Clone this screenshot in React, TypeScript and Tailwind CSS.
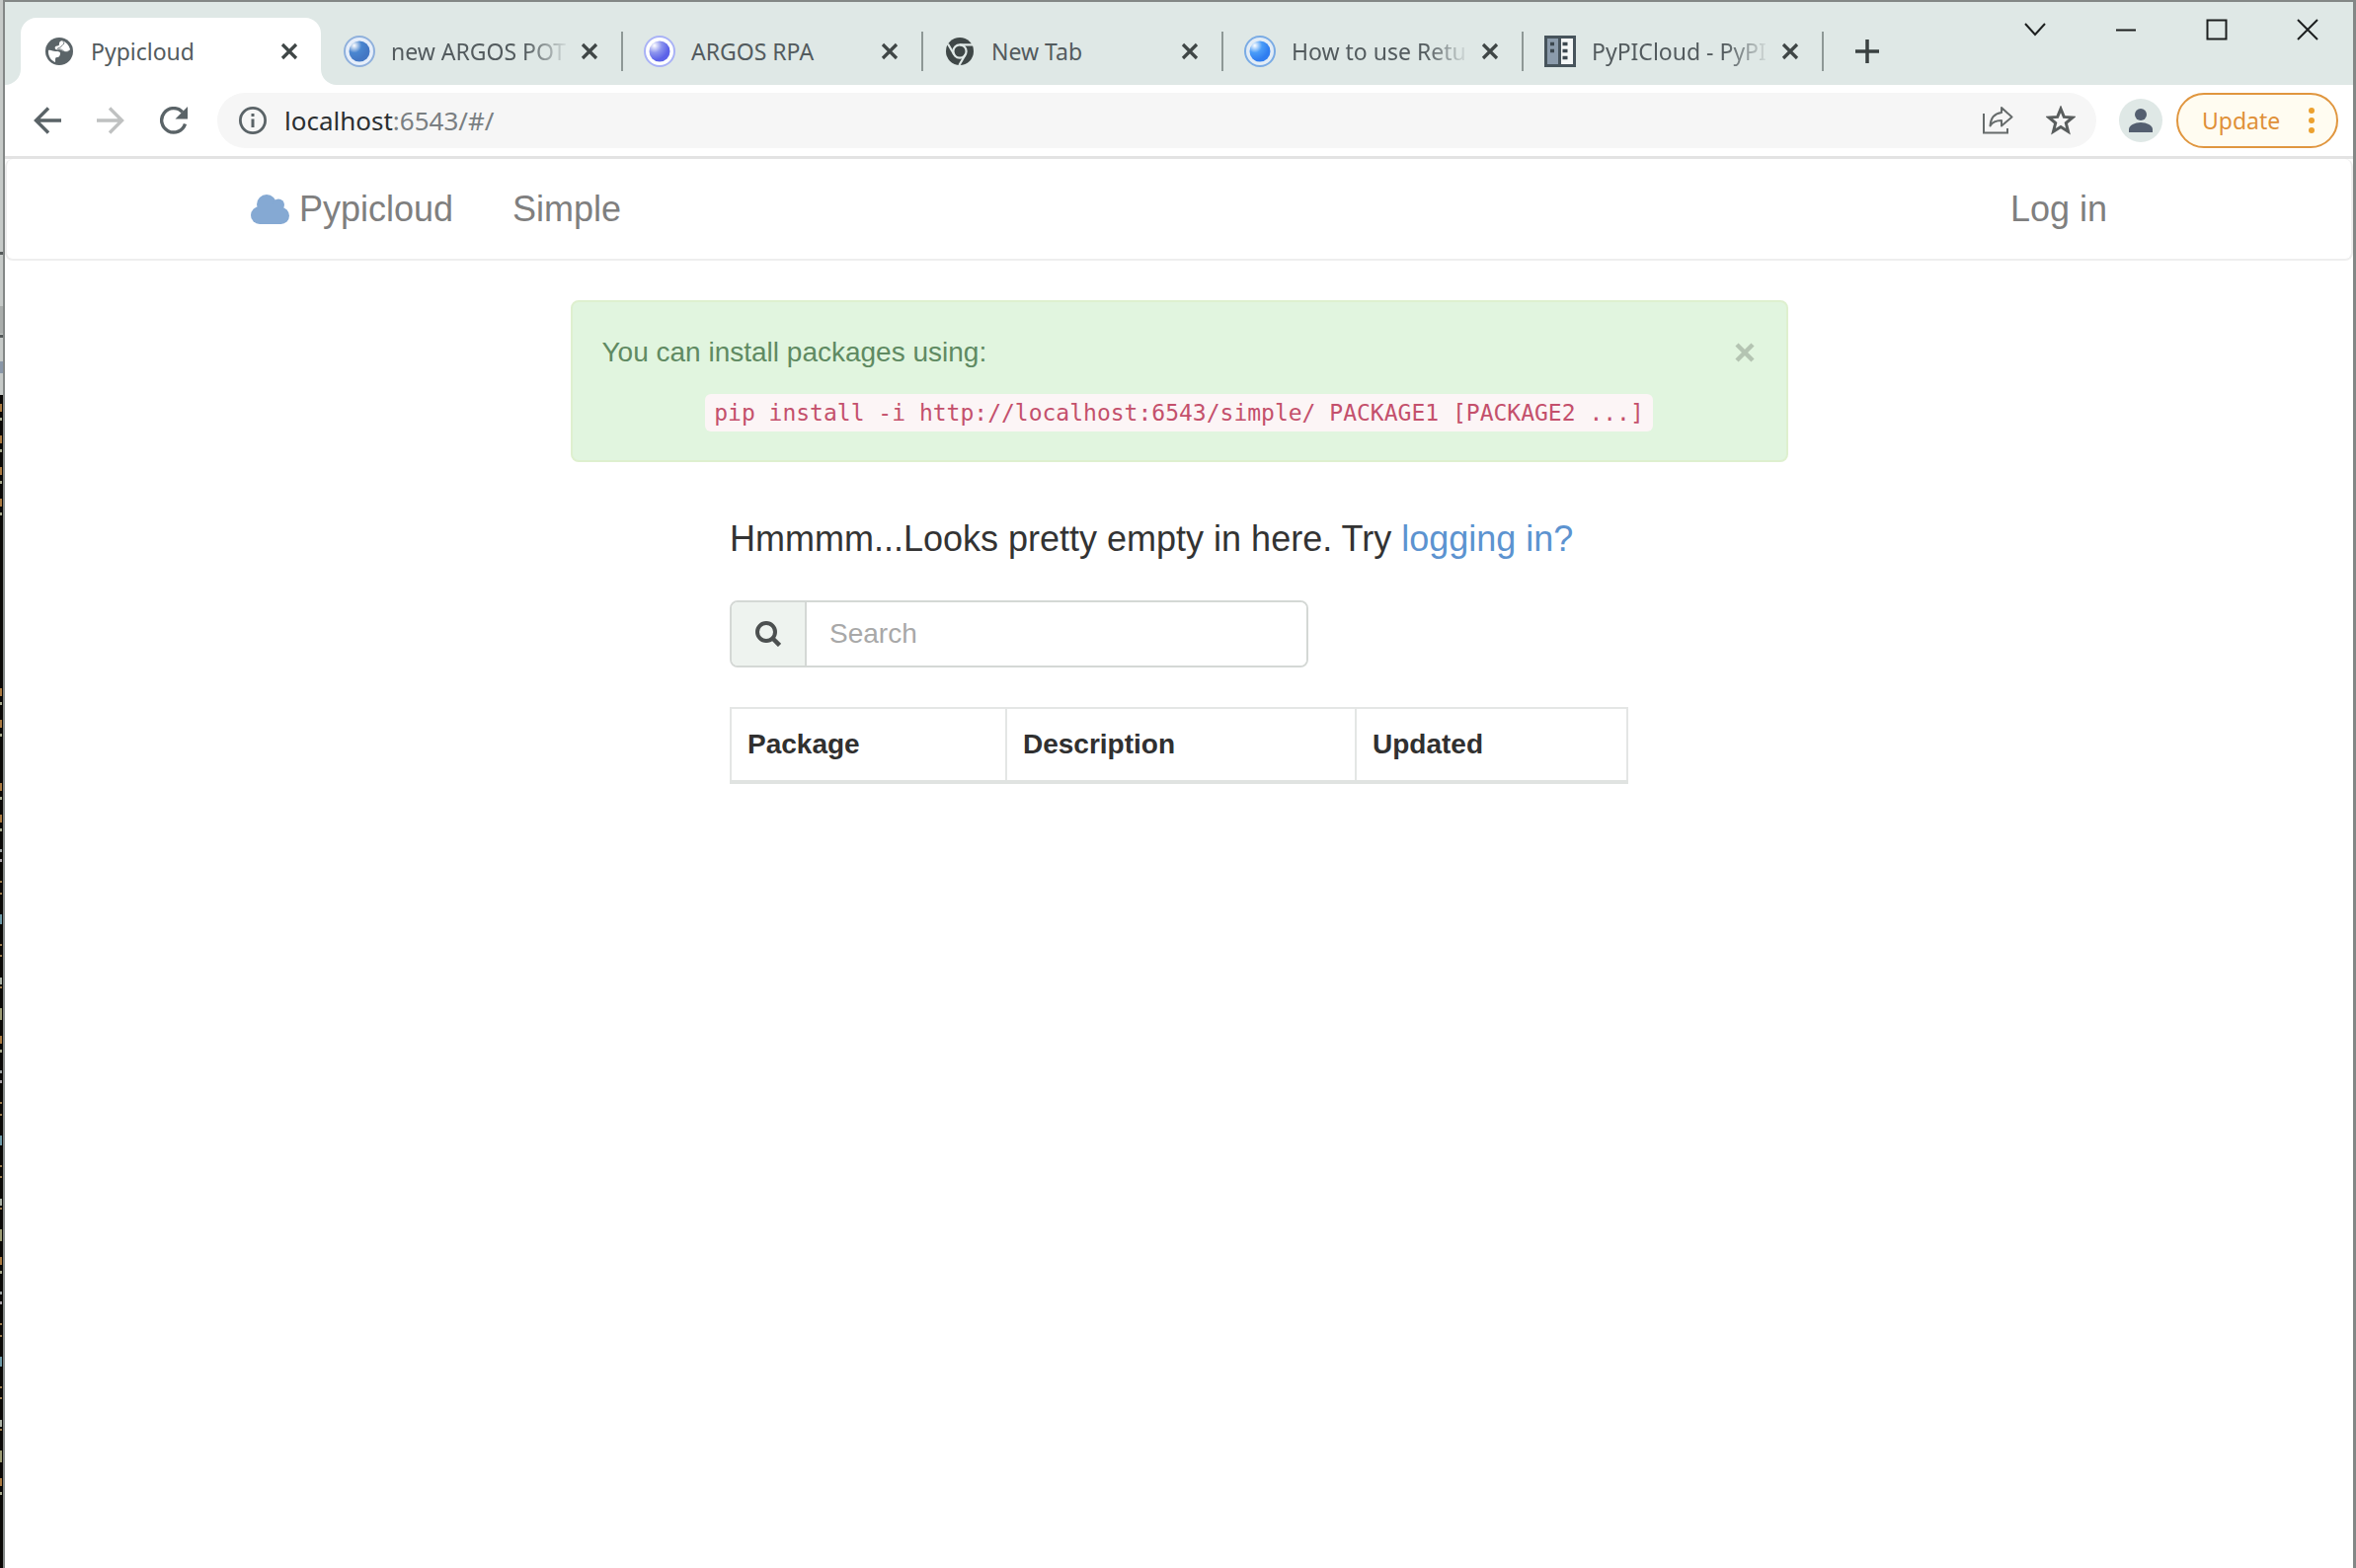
import React, { useState } from "react";

type TabInfo = { title: string; icon: React.ReactNode; active?: boolean; faded?: boolean };

function GlobeIcon() {
  return (
    <svg viewBox="0 0 28 28" className="size-7" aria-hidden="true">
      <circle cx="14" cy="14" r="14" fill="#5b6468" />
      <path d="M3 13c2-1 5 1 7 1s5 0 5 2-1 4-3 4-2 1-2 3v2C6 23.500 2.500 19 3 13z" fill="#fff" />
      <path d="M17 3.200c4 1.300 7 4.300 8 8.800-1 2-3 3-5 2.500S17 13 15 12.500s-4 .5-5-1 0-3 2-3 2-1 2-2.500 1-2.500 3-2.800z" fill="#fff" />
      <path d="M17.500 4c2 .8 1.500 3 0 3.500s-1 2-2.500 2.500-3 .5-2.500 1.500 2.500 0 4 .8 2 2.200 4 2.200 3.500-1 4.500-1c-.3 5-3.500 9-8 10.500 1.500-2 2-3.500 1-5.500" fill="none" stroke="#5b6468" strokeWidth="0.800" />
    </svg>
  );
}

function OrbIcon({ ring, inner, core, glow }: { ring: string; inner: string; core: string; glow: string }) {
  const id = "orb" + core.slice(1);
  return (
    <svg viewBox="0 0 32 32" className="size-8" aria-hidden="true">
      <defs>
        <radialGradient id={id} cx="0.25" cy="0.22" r="0.7">
          <stop offset="0" stopColor="#ffffff" />
          <stop offset="0.5" stopColor={glow} />
          <stop offset="1" stopColor={core} />
        </radialGradient>
      </defs>
      <circle cx="16" cy="16" r="15" fill={inner} stroke={ring} strokeWidth="2" />
      <circle cx="16" cy="16" r="10.500" fill={`url(#${id})`} />
    </svg>
  );
}

function ChromeIcon() {
  return (
    <svg viewBox="0 0 28 28" className="size-7" aria-hidden="true">
      <circle cx="14" cy="14" r="14" fill="#3f4747" />
      <circle cx="14" cy="14" r="6.600" fill="none" stroke="#dfe8e6" strokeWidth="2.200" />
      <path d="M14 7.400h13M8.300 17.300L2 6.500M19.700 17.300L13.400 28" stroke="#dfe8e6" strokeWidth="2.200" fill="none" />
    </svg>
  );
}

function ServerIcon() {
  return (
    <svg viewBox="0 0 32 32" className="size-8" aria-hidden="true">
      <rect x="1.500" y="1.500" width="29" height="29" fill="#f4f7f7" stroke="#47545c" strokeWidth="3" />
      <rect x="3" y="3" width="11" height="26" fill="#8b9bab" />
      <path d="M15.500 2v28" stroke="#47545c" strokeWidth="3" />
      <path d="M6 8.500h4M6 15.500h4M18.500 8.500h5M18.500 15.500h5M18.500 22.500h5" stroke="#3c484f" strokeWidth="3.500" />
    </svg>
  );
}

const tabs: TabInfo[] = [
  { title: "Pypicloud", icon: <GlobeIcon />, active: true },
  { title: "new ARGOS POT", icon: <OrbIcon ring="#8fb0dc" inner="#e6eefa" core="#4377c4" glow="#4a86d0" />, faded: true },
  { title: "ARGOS RPA", icon: <OrbIcon ring="#a9b2f6" inner="#ffffff" core="#5c62e8" glow="#8c94ee" /> },
  { title: "New Tab", icon: <ChromeIcon /> },
  { title: "How to use Retu", icon: <OrbIcon ring="#7aabe4" inner="#e2ecf6" core="#2f7df0" glow="#4a9cf8" />, faded: true },
  { title: "PyPICloud - PyPI", icon: <ServerIcon />, faded: true },
];

function Tab({ tab }: { tab: TabInfo }) {
  return (
    <div
      className={
        tab.active
          ? "relative flex h-17 w-76 shrink items-center rounded-t-2xl bg-white pr-4 pl-[23px]"
          : "relative flex h-17 w-76 shrink items-center pr-4 pl-[23px]"
      }
    >
      {tab.active && (
        <>
          <svg viewBox="0 0 16 16" className="absolute bottom-0 -left-4 size-4" aria-hidden="true">
            <path d="M16 0v16H0A16 16 0 0 0 16 0z" fill="#fff" />
          </svg>
          <svg viewBox="0 0 16 16" className="absolute -right-4 bottom-0 size-4" aria-hidden="true">
            <path d="M0 0v16h16A16 16 0 0 1 0 0z" fill="#fff" />
          </svg>
        </>
      )}
      <span className="flex w-8 shrink-0 justify-center">{tab.icon}</span>
      <button
        type="button"
        className={
          tab.faded
            ? "ml-4 h-9 min-w-0 flex-1 text-left text-[23px] leading-9 whitespace-nowrap text-[#535b5e] [mask-image:linear-gradient(to_right,#000_75%,transparent)]"
            : "ml-4 h-9 min-w-0 flex-1 text-left text-[23px] leading-9 whitespace-nowrap text-[#535b5e]"
        }
      >
        {tab.title}
      </button>
      <button type="button" aria-label={"Close " + tab.title} className="ml-1 flex size-8 shrink-0 items-center justify-center">
        <svg viewBox="0 0 18 18" className="size-[18px]" aria-hidden="true">
          <path d="M2 2l14 14M16 2L2 16" stroke="#3f4646" strokeWidth="3.200" />
        </svg>
      </button>
      {!tab.active && <span className="absolute top-3.5 -right-0.5 h-10 w-0.5 bg-[#8e9896]" />}
    </div>
  );
}

function WindowControls() {
  const items = [
    { label: "Search tabs", d: "M2 6l10 11L22 6" },
    { label: "Minimize", d: "M2 12.500h20" },
    { label: "Maximize", d: "M2.500 2.500h19v19h-19z" },
    { label: "Close window", d: "M2 2l20 20M22 2L2 22" },
  ];
  return (
    <div className="flex">
      {items.map((i) => (
        <button key={i.label} type="button" aria-label={i.label} className="flex h-14 w-23 items-center justify-center">
          <svg viewBox="0 0 24 24" className="size-6" fill="none" stroke="#1c1f1f" strokeWidth="2" aria-hidden="true">
            <path d={i.d} />
          </svg>
        </button>
      ))}
    </div>
  );
}

function TabStrip() {
  return (
    <div className="flex h-[84px] items-start justify-between bg-[#dfe8e6] pl-4">
      <div className="flex min-w-0 items-center pt-4">
        {tabs.map((t) => (
          <Tab key={t.title} tab={t} />
        ))}
        <button type="button" aria-label="New tab" className="ml-7 flex size-9 items-center justify-center">
          <svg viewBox="0 0 24 24" className="size-6" aria-hidden="true">
            <path d="M12 0v24M0 12h24" stroke="#3a4141" strokeWidth="3.500" />
          </svg>
        </button>
      </div>
      <WindowControls />
    </div>
  );
}

function Toolbar() {
  return (
    <div className="flex h-[75px] items-center border-b-3 border-[#e3e3e3] bg-white pr-[15px] pl-[27px]">
      <button type="button" aria-label="Back" className="flex size-8 items-center justify-center">
        <svg viewBox="0 0 28 28" className="size-7" fill="none" stroke="#5a6367" strokeWidth="3.400" aria-hidden="true">
          <path d="M28 14H3M15 1.500L2.500 14 15 26.500" />
        </svg>
      </button>
      <button type="button" aria-label="Forward" className="ml-8 flex size-8 items-center justify-center">
        <svg viewBox="0 0 28 28" className="size-7" fill="none" stroke="#bfc1c1" strokeWidth="3.400" aria-hidden="true">
          <path d="M0 14h25M13 1.500L25.500 14 13 26.500" />
        </svg>
      </button>
      <button type="button" aria-label="Reload" className="ml-8 flex size-8 items-center justify-center">
        <svg viewBox="0 0 28 28" className="size-7" aria-hidden="true">
          <path d="M25.500 17.500A12.200 12.200 0 1 1 22.800 5.500" fill="none" stroke="#5a6367" strokeWidth="3.400" />
          <path d="M28 0v12.500H15.500z" fill="#5a6367" />
        </svg>
      </button>
      <div className="ml-7 flex h-14 min-w-0 flex-1 items-center rounded-full bg-[#f6f6f6] pr-5 pl-[22px]">
        <svg viewBox="0 0 28 28" className="size-7 shrink-0" aria-hidden="true">
          <circle cx="14" cy="14" r="12.600" fill="none" stroke="#5a6367" strokeWidth="2.800" />
          <path d="M14 12.500v8.500M14 7v3" stroke="#5a6367" strokeWidth="3" />
        </svg>
        <div className="ml-[18px] flex-1 text-[26px] leading-9 text-[#7a7f82]">
          <span className="text-[#2b2f31]">localhost</span>:6543/#/
        </div>
        <button type="button" aria-label="Share" className="flex size-8 items-center justify-center">
          <svg viewBox="0 0 32 32" className="size-8" fill="none" stroke="#666b6b" strokeWidth="2" aria-hidden="true">
            <path d="M2 9v19.500h24V24" />
            <path d="M20 3l10.500 9.500L20 21.500v-5.500c-5.500 0-9 1-11.500 5.500C9 13.500 13 8.800 20 8z" strokeLinejoin="round" />
          </svg>
        </button>
        <button type="button" aria-label="Bookmark" className="ml-8 flex size-8 items-center justify-center">
          <svg viewBox="0 0 30 30" className="size-[30px]" fill="none" stroke="#595d5d" strokeWidth="3" aria-hidden="true">
            <path d="M15 3.200l3.300 8.200 8.700.6-6.700 5.600 2.200 8.600L15 21.500l-7.500 4.700 2.200-8.600L3 12l8.700-.6z" />
          </svg>
        </button>
      </div>
      <button type="button" aria-label="Profile" className="ml-[23px] flex size-11 shrink-0 items-center justify-center rounded-full bg-[#dfe8e6]">
        <svg viewBox="0 0 24 24" className="size-6" fill="#545f70" aria-hidden="true">
          <circle cx="12" cy="6" r="6" />
          <path d="M0 24v-3c0-4 6-7 12-7s12 3 12 7v3z" />
        </svg>
      </button>
      <button
        type="button"
        className="ml-3.5 flex h-14 w-41 shrink-0 items-center justify-between rounded-full border-2 border-[#e0963f] bg-[#fffcf1] pr-[22px] pl-6 text-[23px] text-[#df9038]"
      >
        Update
        <svg viewBox="0 0 6 28" className="h-7 w-1.5" fill="#eca12f" aria-hidden="true">
          <circle cx="3" cy="4" r="3" />
          <circle cx="3" cy="14" r="3" />
          <circle cx="3" cy="24" r="3" />
        </svg>
      </button>
    </div>
  );
}

function CloudIcon() {
  return (
    <svg viewBox="0 0 39 30" className="h-[30px] w-[39px]" fill="#85a9d3" aria-hidden="true">
      <circle cx="16" cy="10" r="10" />
      <circle cx="28" cy="10.500" r="6" />
      <circle cx="9" cy="21" r="9" />
      <circle cx="30.500" cy="21.500" r="8.500" />
      <path d="M7 10h25v10H7zM9 18h22v12H9z" />
    </svg>
  );
}

function Navbar() {
  return (
    <nav className="flex h-[103px] items-center justify-between rounded-lg border-2 border-t-0 border-[#eeeeee] px-[247px] text-4xl text-[#7f7f7f]">
      <div className="flex items-center gap-15">
        <a href="#/" className="flex items-center gap-2.5">
          <CloudIcon />
          Pypicloud
        </a>
        <a href="#/simple">Simple</a>
      </div>
      <a href="#/login">Log in</a>
    </nav>
  );
}

function InstallAlert() {
  const [open, setOpen] = useState(true);
  if (!open) return null;
  return (
    <section className="rounded-lg border-2 border-[#def0cf] bg-[#e1f5df] px-[30px] pt-[31px] pb-[29px]">
      <div className="flex items-center justify-between">
        <p className="text-[28px] leading-10 text-[#5f8a62]">You can install packages using:</p>
        <button type="button" aria-label="Dismiss" onClick={() => setOpen(false)} className="flex size-6 items-center justify-center">
          <svg viewBox="0 0 20 20" className="size-5" aria-hidden="true">
            <path d="M2 2l16 16M18 2L2 18" stroke="#b4c4b2" strokeWidth="4.500" />
          </svg>
        </button>
      </div>
      <div className="mt-[22px] flex justify-center">
        <code className="rounded-md bg-[#fcf5f6] px-[9px] font-['DejaVu_Sans_Mono',monospace] text-[23px] leading-[38px] whitespace-nowrap text-[#c4506c]">
          pip install -i http://localhost:6543/simple/ PACKAGE1 [PACKAGE2 ...]
        </code>
      </div>
    </section>
  );
}

function PackageList() {
  return (
    <section className="mx-auto mt-[58px] w-[910px]">
      <h1 className="text-4xl text-[#333333]">
        Hmmmm...Looks pretty empty in here. Try{" "}
        <a href="#/login" className="text-[#5c93d0]">
          logging in?
        </a>
      </h1>
      <div className="mt-[42px] flex h-17 w-[586px] overflow-hidden rounded-lg border-2 border-[#d4d8d5]">
        <label htmlFor="search" aria-label="Search" className="flex w-[74px] items-center justify-center bg-[#eef3ef]">
          <svg viewBox="0 0 26 26" className="size-[26px]" fill="none" stroke="#4c5050" aria-hidden="true">
            <circle cx="11" cy="11" r="9" strokeWidth="4" />
            <path d="M17.500 17.500l7 7" strokeWidth="4.500" />
          </svg>
        </label>
        <input
          id="search"
          type="text"
          placeholder="Search"
          className="min-w-0 flex-1 border-l-2 border-[#d4d8d5] bg-white px-[23px] text-[28px] outline-none placeholder:text-[#a8a8a8]"
        />
      </div>
      <table className="mt-10 w-full table-fixed border-collapse border-2 border-[#e4e6e5] text-left text-[28px] text-[#303030]">
        <thead>
          <tr className="border-b-4 border-[#e0e3e1]">
            <th scope="col" className="h-[75px] w-[279px] border-r-2 border-[#e4e6e5] px-4">Package</th>
            <th scope="col" className="w-[354px] border-r-2 border-[#e4e6e5] px-4">Description</th>
            <th scope="col" className="px-4">Updated</th>
          </tr>
        </thead>
      </table>
    </section>
  );
}

const prompts = [413, 445, 477, 509, 701, 733, 797, 829, 1053, 1277, 1501];
const blocks = [861, 1085, 1309];

/** Sliver of the windows that sit behind the browser's left edge. */
function DesktopEdge() {
  return (
    <svg viewBox="0 0 3 1588" width="3" height="1588" className="shrink-0" aria-hidden="true">
      <rect width="3" height="400" fill="#c6cac8" />
      <path d="M0 256.500h3M0 340.500h3" stroke="#555a5a" strokeWidth="3" />
      <path d="M0 310h3v28H0z" fill="#a9adab" />
      <path d="M0 366h3v12H0z" fill="#8a97a8" />
      <rect y="400" width="3" height="1188" fill="#0a0806" />
      {prompts.map((y) => (
        <g key={y}>
          <rect y={y - 4} width="2" height="8" fill="#a9783f" />
          <rect y={y + 10} width="2" height="3" fill="#a6a98c" />
        </g>
      ))}
      {blocks.map((y) => (
        <g key={y}>
          <rect y={y - 1} width="2" height="3" fill="#9aa0a0" />
          <rect y={y + 9} width="2" height="3" fill="#a9a2a8" />
          <path d={`M0 ${y + 32}h2M0 ${y + 44}h2M0 ${y + 96}h2M0 ${y + 107}h2M0 ${y + 139}h2`} stroke="#9a7a4c" strokeWidth="2" />
          <rect y={y + 65} width="2" height="10" fill="#6c98a6" />
          <rect y={y + 129} width="2" height="7" fill="#a9b0a4" />
          <rect y={y + 160} width="2" height="12" fill="#9a9a72" />
        </g>
      ))}
    </svg>
  );
}

export default function App() {
  return (
    <div className="flex min-h-screen bg-[#0a0806] font-['Liberation_Sans',Arial,sans-serif]">
      <DesktopEdge />
      <div className="min-w-0 flex-1 border-t-2 border-r-3 border-l-2 border-[#838786] bg-white">
        <header className="font-['Noto_Sans','Open_Sans',sans-serif]">
          <TabStrip />
          <Toolbar />
        </header>
        <Navbar />
        <main className="mx-auto mt-10 w-[1233px]">
          <InstallAlert />
          <PackageList />
        </main>
      </div>
    </div>
  );
}
